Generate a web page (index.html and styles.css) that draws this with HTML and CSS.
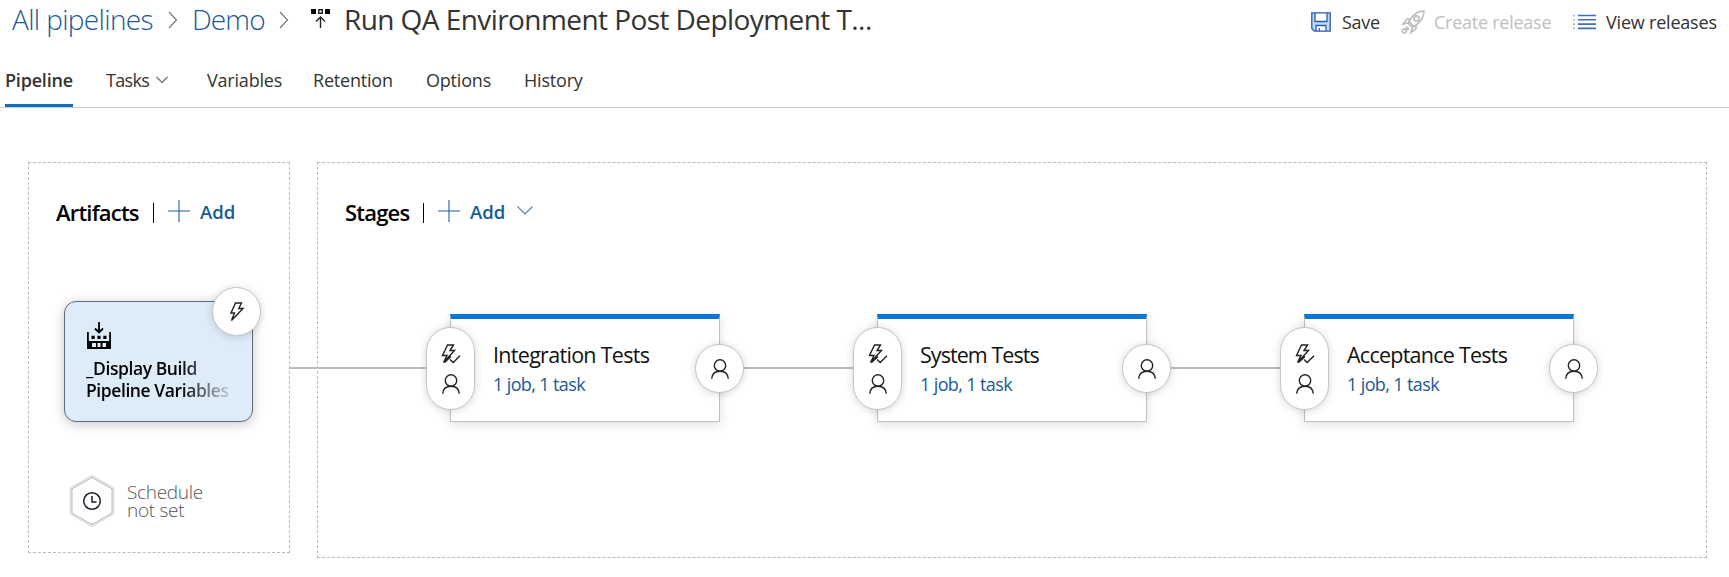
FILE: index.html
```html
<!DOCTYPE html>
<html lang="en">
<head>
<meta charset="utf-8">
<title>Run QA Environment Post Deployment</title>
<link rel="stylesheet" href="styles.css">
</head>
<body>
<svg class="defs" width="0" height="0">
  <symbol id="person" viewBox="0 0 18 20"><circle cx="9" cy="6.500" r="5.700"/><path d="M.700 19.800C1 14.800 4.500 12.200 9 12.200s8 2.600 8.300 7.600"/></symbol>
  <symbol id="boltcheck" viewBox="0 0 20 20"><path d="M6.500 1h6L9 6.500h4.500L2.500 18.500 6 11.500H1.500zM9 15.500l3.200 3 6.800-6.700M3.500 18.500L10 12.500"/></symbol>
  <symbol id="plus" viewBox="0 0 22 22"><path d="M11 0v22M0 11h22"/></symbol>
</svg>
<header class="topbar">
  <nav class="crumbs">
    <a class="crumb crumb-all">All pipelines</a>
    <svg class="sep" width="10" height="18" viewBox="0 0 10 18"><path d="M1 1l7.500 8L1 17"/></svg>
    <a class="crumb crumb-demo">Demo</a>
    <svg class="sep" width="10" height="18" viewBox="0 0 10 18"><path d="M1 1l7.500 8L1 17"/></svg>
    <svg class="release-icon" width="20" height="20" viewBox="0 0 20 20"><path class="solid" d="M0 0h5v5H0zM14 0h5v5h-5z"/><path d="M7.800.8h3.500v3.500H7.800zM9.500 19V8.500M5 12.500l4.500-4.500 4.500 4.500"/></svg>
    <span class="crumb crumb-title">Run QA Environment Post Deployment T...</span>
  </nav>
  <div class="tools">
    <svg class="ico-save" width="20" height="20" viewBox="0 0 20 20"><path class="tint" d="M1 1h3v9h12V1h3v18h-3v-6H5v6H3l-2-2z"/><path d="M.8.800h18.400v18.400H3.500L.8 16.500zM4 1v8.500h12V1M5 19v-5.500h10V19M8.200 19v-3"/></svg>
    <span class="tool t-save">Save</span>
    <svg class="ico-rocket" width="24" height="24" viewBox="0 0 24 24"><path d="M23 1c-6 0-10 2.500-13.500 8L7 13l4.500 4.500L15 15c5-3.500 8-8 8-14zM9.500 9H6l-4 5 5-1M15 15v3.500l-5 4 1.500-5M8 11.500l5 5"/><circle cx="15.500" cy="8.500" r="2.600"/><path d="M5 16.500l2.500 2.500-2 1M6 18l-3 1.500"/><circle cx="3.300" cy="21" r="2"/></svg>
    <span class="tool t-create">Create release</span>
    <svg class="ico-list" width="23" height="16" viewBox="0 0 23 16"><path d="M5 1.500h18M5 5.800h18M5 10.100h18M5 14.400h18"/><path class="dots" d="M0 1.500h2M0 5.800h2M0 10.100h2M0 14.400h2"/></svg>
    <span class="tool t-view">View releases</span>
  </div>
</header>
<nav class="tabs">
  <a class="tab tab-active">Pipeline</a>
  <a class="tab tab-tasks"><span>Tasks</span><svg class="chev" width="12" height="8" viewBox="0 0 12 8"><path d="M.5 1l5.500 5.500L11.500 1"/></svg></a>
  <a class="tab tab-variables">Variables</a>
  <a class="tab tab-retention">Retention</a>
  <a class="tab tab-options">Options</a>
  <a class="tab tab-history">History</a>
</nav>
<main class="canvas">
  <section class="panel artifacts">
    <div class="panel-head">
      <h2 class="head-artifacts">Artifacts</h2><i class="bar"></i>
      <svg class="plus" width="22" height="22"><use href="#plus"/></svg><a class="add">Add</a>
    </div>
    <div class="artifact">
      <svg width="24" height="28" viewBox="0 0 24 28"><path class="line" d="M12 0v10M8 6.500l4 4 4-4"/><path class="solid" d="M0 10h1.800v9h20.400v-9H24v17H0zM4.500 13.800h3.200V17H4.500zM10.400 13.800h3.200V17h-3.200zM16.300 13.800h3.200V17h-3.200z"/><path class="hole" d="M5 21h4v4H5zM10.500 21h3v4h-3zM15.500 21h3.500v4h-3.500z"/></svg>
      <div class="artifact-name"><span>_Display Build</span><span>Pipeline Variables</span></div>
      <div class="trigger"><svg width="16" height="20" viewBox="0 0 16 20"><path d="M6.500 1h6L9.800 6.500H14L2.500 18.500 5.500 11H2z"/></svg></div>
    </div>
    <div class="schedule">
      <svg width="52" height="58" viewBox="0 0 52 58"><path class="halo" d="M26 5.500l20 11.500v24L26 52.500 6 41V17z"/><path class="hex" d="M26 5.500l20 11.500v24L26 52.500 6 41V17z"/><circle class="clock" cx="26" cy="29" r="8.300"/><path class="clock" d="M26 24v6h4.500"/></svg>
      <div class="schedule-text"><span>Schedule</span><span>not set</span></div>
    </div>
  </section>
  <i class="bridge"></i>
  <section class="panel stages">
    <div class="panel-head">
      <h2 class="head-stages">Stages</h2><i class="bar"></i>
      <svg class="plus" width="22" height="22"><use href="#plus"/></svg><a class="add">Add</a>
      <svg class="chev chev-add" width="16" height="9" viewBox="0 0 16 9"><path d="M.5.500L8 8 15.500.500"/></svg>
    </div>
    <div class="flow">
      <i class="wire wire-first"></i>
      <article class="stage">
        <div class="pill"><svg width="20" height="20"><use href="#boltcheck"/></svg><svg width="18" height="20"><use href="#person"/></svg></div>
        <h3 class="name name-1">Integration Tests</h3><a class="jobs">1 job, 1 task</a>
        <div class="post"><svg width="18" height="20"><use href="#person"/></svg></div>
      </article>
      <i class="wire"></i>
      <article class="stage">
        <div class="pill"><svg width="20" height="20"><use href="#boltcheck"/></svg><svg width="18" height="20"><use href="#person"/></svg></div>
        <h3 class="name name-2">System Tests</h3><a class="jobs">1 job, 1 task</a>
        <div class="post"><svg width="18" height="20"><use href="#person"/></svg></div>
      </article>
      <i class="wire"></i>
      <article class="stage">
        <div class="pill"><svg width="20" height="20"><use href="#boltcheck"/></svg><svg width="18" height="20"><use href="#person"/></svg></div>
        <h3 class="name name-3">Acceptance Tests</h3><a class="jobs">1 job, 1 task</a>
        <div class="post"><svg width="18" height="20"><use href="#person"/></svg></div>
      </article>
    </div>
  </section>
</main>
</body>
</html>
```

FILE: styles.css
```css
* { box-sizing: border-box; }
body { margin: 0; width: 1729px; height: 577px; overflow: hidden; background: #fff; color: #333; font-family: "Open Sans", "Noto Sans", sans-serif; font-size: 18px; white-space: nowrap; }
svg { display: block; flex: none; fill: none; stroke: #222; stroke-width: 1.4; overflow: visible; }
.defs { position: absolute; }
.solid { fill: #000; stroke: none; }
h2, h3 { margin: 0; }

.topbar { display: flex; justify-content: space-between; height: 53px; padding-left: 12px; }
.crumbs { display: flex; align-items: center; height: 38px; }
.crumb { font-size: 28px; line-height: 38px; flex: none; }
.crumb-all, .crumb-demo { font-weight: 300; color: #1a5a96; }
.crumb-all { width: 156px; letter-spacing: -0.650px; }
.crumb-demo { width: 72px; margin-left: 14px; letter-spacing: -0.9px; }
.sep { stroke: #777; stroke-width: 1.2; margin-top: 2px; }
.crumb-demo + .sep { margin-left: 15px; }
.release-icon { margin-left: 22px; }
.crumb-title { width: 530px; margin-left: 13px; letter-spacing: -0.570px; color: #333; }
.tools { display: flex; align-items: center; height: 44px; }
.tool { line-height: 28px; flex: none; letter-spacing: -0.25px; }
.ico-save { stroke: #2b5cab; stroke-width: 1.3; }
.tint { fill: #bcdcf5; stroke: none; }
.t-save { margin-left: 11px; width: 59px; }
.ico-rocket { stroke: #bbb; stroke-width: 1.6; }
.t-create { margin-left: 9px; width: 139px; color: #c0c0c0; }
.ico-list { stroke: #3f6cbf; stroke-width: 1.6; }
.dots { stroke: #a5bbe0; }
.t-view { margin-left: 10px; width: 123px; letter-spacing: -0.2px; }

.tabs { display: flex; height: 55px; padding-left: 5px; border-bottom: 1px solid #ccc; }
.tab { display: flex; align-items: center; height: 54px; letter-spacing: -0.2px; flex: none; }
.tab-active { width: 68px; font-weight: 600; box-shadow: inset 0 -3px #1070c0; }
.tab-tasks { width: 101px; margin-left: 33px; letter-spacing: -0.7px; }
.tab-tasks .chev { margin-left: 7px; }
.tab-variables { width: 106px; }
.tab-retention { width: 113px; }
.tab-options { width: 98px; }
.chev { stroke: #666; stroke-width: 1.1; }

.canvas { display: grid; grid-template-columns: 262px 27px 1390px; align-items: start; padding: 54px 0 0 28px; }
.panel { border: 1px dashed #bbb; padding: 35px 0 0 27px; }
.artifacts { height: 391px; }
.stages { height: 396px; }
.bridge { height: 2px; margin-top: 205px; background: #bbb; }
.panel-head { display: flex; align-items: center; height: 30px; }
.panel-head h2 { font-size: 22px; line-height: 30px; font-weight: 600; color: #000; letter-spacing: -0.8px; flex: none; margin-top: -2px; }
.head-artifacts { width: 97px; }
.head-stages { width: 78px; }
.bar { width: 1px; height: 20px; background: #000; flex: none; }
.plus { margin-left: 14px; stroke: #1f5f9f; stroke-width: 1.1; margin-top: -4px; }
.add { margin-left: 10px; width: 36px; margin-top: -4px; font-weight: 600; color: #165a96; font-size: 18.500px; }
.chev-add { margin-left: 11px; stroke: #56809f; margin-top: -5px; }

.artifact { position: relative; width: 189px; height: 121px; margin: 73px 0 0 8px; padding: 20px 0 0 22px; border: 1px solid #5f6b76; border-radius: 12px; background: #deebf9; box-shadow: 0 2px 12px rgba(0,0,0,.22); }
.artifact .line { stroke: #000; stroke-width: 1.8; }
.hole { fill: #deebf9; stroke: none; }
.artifact-name { display: flex; flex-direction: column; margin: 7px 0 0 -1px; width: 142px; font-size: 17.500px; line-height: 22px; font-weight: 600; letter-spacing: -0.420px; color: #000; -webkit-mask-image: linear-gradient(to right, #000 66%, transparent 106%); mask-image: linear-gradient(to right, #000 66%, transparent 106%); }
.trigger, .post, .pill { position: absolute; background: #fff; border: 1px solid #c4c4c4; box-shadow: 0 1px 9px rgba(0,0,0,.16); display: flex; flex-direction: column; align-items: center; justify-content: center; }
.trigger { width: 49px; height: 49px; border-radius: 50%; right: -9px; top: -15px; }
.schedule { display: flex; align-items: center; margin: 50px 0 0 10px; }
.halo { stroke: #e4e4e4; stroke-width: 5; }
.hex { fill: #fff; stroke: #bbb; stroke-width: 1; }
.clock { stroke: #1c1c2c; stroke-width: 1.5; }
.schedule-text { display: flex; flex-direction: column; margin-left: 9px; font-size: 19px; line-height: 18px; font-weight: 300; letter-spacing: -0.3px; color: #555; }

.flow { display: flex; align-items: center; height: 108px; margin: 86px 0 0 -27px; }
.wire { height: 2px; width: 157px; background: #bbb; flex: none; }
.wire-first { width: 132px; }
.stage { position: relative; width: 270px; height: 108px; flex: none; padding: 22px 0 0 42px; border: 1px solid #bfbfbf; border-top: 5px solid #0a78d0; background: #fff; box-shadow: 0 3px 10px rgba(0,0,0,.13); }
.name { font-size: 21.500px; line-height: 28px; font-weight: 400; color: #111; letter-spacing: -0.7px; }
.name-2 { letter-spacing: -0.950px; }
.name-3 { letter-spacing: -0.750px; }
.jobs { display: block; margin-top: 1px; line-height: 28px; color: #1a5a96; letter-spacing: -0.620px; }
.pill { width: 49px; height: 83px; border-radius: 24.500px; left: -25px; top: 8px; gap: 10px; }
.post { width: 49px; height: 49px; border-radius: 50%; right: -25px; top: 25px; }
```
